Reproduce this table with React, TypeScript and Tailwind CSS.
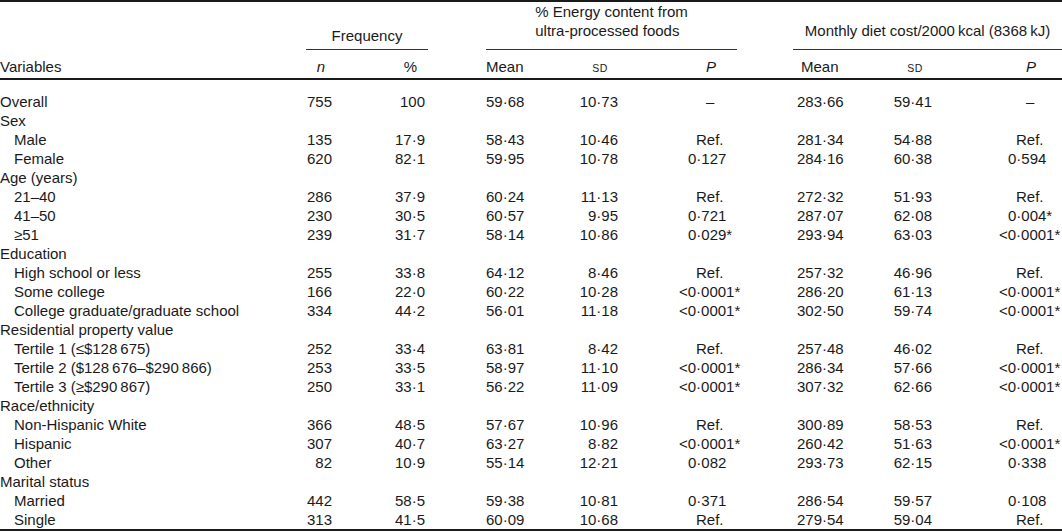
import React from "react";

type Row = {
  label: string;
  indent?: boolean;
  vals?: string[]; // n, %, eMean, eSd, eP, mMean, mSd, mP
};

const rows: Row[] = [
  { label: "Overall", vals: ["755", "100", "59·68", "10·73", "–", "283·66", "59·41", "–"] },
  { label: "Sex" },
  { label: "Male", indent: true, vals: ["135", "17·9", "58·43", "10·46", "Ref.", "281·34", "54·88", "Ref."] },
  { label: "Female", indent: true, vals: ["620", "82·1", "59·95", "10·78", "0·127", "284·16", "60·38", "0·594"] },
  { label: "Age (years)" },
  { label: "21–40", indent: true, vals: ["286", "37·9", "60·24", "11·13", "Ref.", "272·32", "51·93", "Ref."] },
  { label: "41–50", indent: true, vals: ["230", "30·5", "60·57", "9·95", "0·721", "287·07", "62·08", "0·004*"] },
  { label: "≥51", indent: true, vals: ["239", "31·7", "58·14", "10·86", "0·029*", "293·94", "63·03", "<0·0001*"] },
  { label: "Education" },
  { label: "High school or less", indent: true, vals: ["255", "33·8", "64·12", "8·46", "Ref.", "257·32", "46·96", "Ref."] },
  { label: "Some college", indent: true, vals: ["166", "22·0", "60·22", "10·28", "<0·0001*", "286·20", "61·13", "<0·0001*"] },
  { label: "College graduate/graduate school", indent: true, vals: ["334", "44·2", "56·01", "11·18", "<0·0001*", "302·50", "59·74", "<0·0001*"] },
  { label: "Residential property value" },
  { label: "Tertile 1 (≤$128\u2009675)", indent: true, vals: ["252", "33·4", "63·81", "8·42", "Ref.", "257·48", "46·02", "Ref."] },
  { label: "Tertile 2 ($128\u2009676–$290\u2009866)", indent: true, vals: ["253", "33·5", "58·97", "11·10", "<0·0001*", "286·34", "57·66", "<0·0001*"] },
  { label: "Tertile 3 (≥$290\u2009867)", indent: true, vals: ["250", "33·1", "56·22", "11·09", "<0·0001*", "307·32", "62·66", "<0·0001*"] },
  { label: "Race/ethnicity" },
  { label: "Non-Hispanic White", indent: true, vals: ["366", "48·5", "57·67", "10·96", "Ref.", "300·89", "58·53", "Ref."] },
  { label: "Hispanic", indent: true, vals: ["307", "40·7", "63·27", "8·82", "<0·0001*", "260·42", "51·63", "<0·0001*"] },
  { label: "Other", indent: true, vals: ["82", "10·9", "55·14", "12·21", "0·082", "293·73", "62·15", "0·338"] },
  { label: "Marital status" },
  { label: "Married", indent: true, vals: ["442", "58·5", "59·38", "10·81", "0·371", "286·54", "59·57", "0·108"] },
  { label: "Single", indent: true, vals: ["313", "41·5", "60·09", "10·68", "Ref.", "279·54", "59·04", "Ref."] },
];

const cols = "grid grid-cols-[280px_60px_100px_120px_80px_120px_120px_80px_102px]";

// P values line up on the leading zero, "<" hangs left, "*" hangs right
const PCell = ({ v }: { v: string }) => {
  let pad = "pl-[48px]";
  if (v.startsWith("<")) pad = "pl-[39px]";
  else if (v === "Ref.") pad = "pl-[56px]";
  else if (v === "–") pad = "pl-[66px]";
  return <div className={`${pad} whitespace-nowrap`}>{v}</div>;
};

const Sd = () => <span className="text-[10.5px] tracking-[0.6px]">SD</span>;

export default function App() {
  return (
    <div className="w-[1062px] h-[532px] overflow-hidden bg-white text-[#1a1a1a] font-['Liberation_Sans',Arial,sans-serif] text-[15px] leading-[19px]">
      {/* top rule */}
      <div className="h-[2px] bg-[#1a1a1a]" />

      {/* spanning headers */}
      <div className={`${cols} h-[47px]`}>
        <div />
        <div className="col-span-2 flex flex-col justify-end pb-[4px] pl-[26px] pr-[12px]">
          <div className="text-center">Frequency</div>
        </div>
        <div className="col-span-3 pl-[46px] pr-[23px] text-center">
          <div className="inline-block text-left">
            <div>% Energy content from</div>
            <div>ultra-processed foods</div>
          </div>
        </div>
        <div className="col-span-3 flex flex-col justify-end pb-[9px] pl-[33px]">
          <div className="text-center whitespace-nowrap">
            Monthly diet cost/2000{"\u2009"}kcal (8368{"\u2009"}kJ)
          </div>
        </div>
      </div>

      {/* spanner rules */}
      <div className={`${cols} h-[1px]`}>
        <div />
        <div className="col-span-2 pl-[26px] pr-[12px]">
          <div className="h-[1px] bg-[#333]" />
        </div>
        <div className="col-span-3 pl-[46px] pr-[23px]">
          <div className="h-[1px] bg-[#333]" />
        </div>
        <div className="col-span-3 pl-[33px]">
          <div className="h-[1px] bg-[#333]" />
        </div>
      </div>

      {/* column headers */}
      <div className={`${cols} pt-[7px] h-[28px]`}>
        <div>Variables</div>
        <div className="text-right pr-[15px] italic">n</div>
        <div className="text-right pr-[23px]">%</div>
        <div className="pl-[46px]">Mean</div>
        <div className="text-right pr-[32px]"><Sd /></div>
        <div className="pl-[66px] italic">P</div>
        <div className="pl-[41px]">Mean</div>
        <div className="text-right pr-[37px]"><Sd /></div>
        <div className="pl-[66px] italic">P</div>
      </div>

      {/* header rule */}
      <div className="h-[2px] bg-[#1a1a1a]" />

      {/* body */}
      <div className="pt-[12px]">
        {rows.map((r, i) => (
          <div key={i} className={`${cols} h-[19px]`}>
            <div className={`${r.indent ? "pl-[14px]" : ""} whitespace-nowrap`}>{r.label}</div>
            {r.vals && (
              <>
                <div className="text-right pr-[8px]">{r.vals[0]}</div>
                <div className="text-right pr-[15px]">{r.vals[1]}</div>
                <div className="pl-[46px]">{r.vals[2]}</div>
                <div className="text-right pr-[22px]">{r.vals[3]}</div>
                <PCell v={r.vals[4]} />
                <div className="pl-[37px]">{r.vals[5]}</div>
                <div className="text-right pr-[28px]">{r.vals[6]}</div>
                <PCell v={r.vals[7]} />
              </>
            )}
          </div>
        ))}
      </div>

      {/* bottom rule */}
      <div className="h-[2px] bg-[#1a1a1a]" />
    </div>
  );
}
